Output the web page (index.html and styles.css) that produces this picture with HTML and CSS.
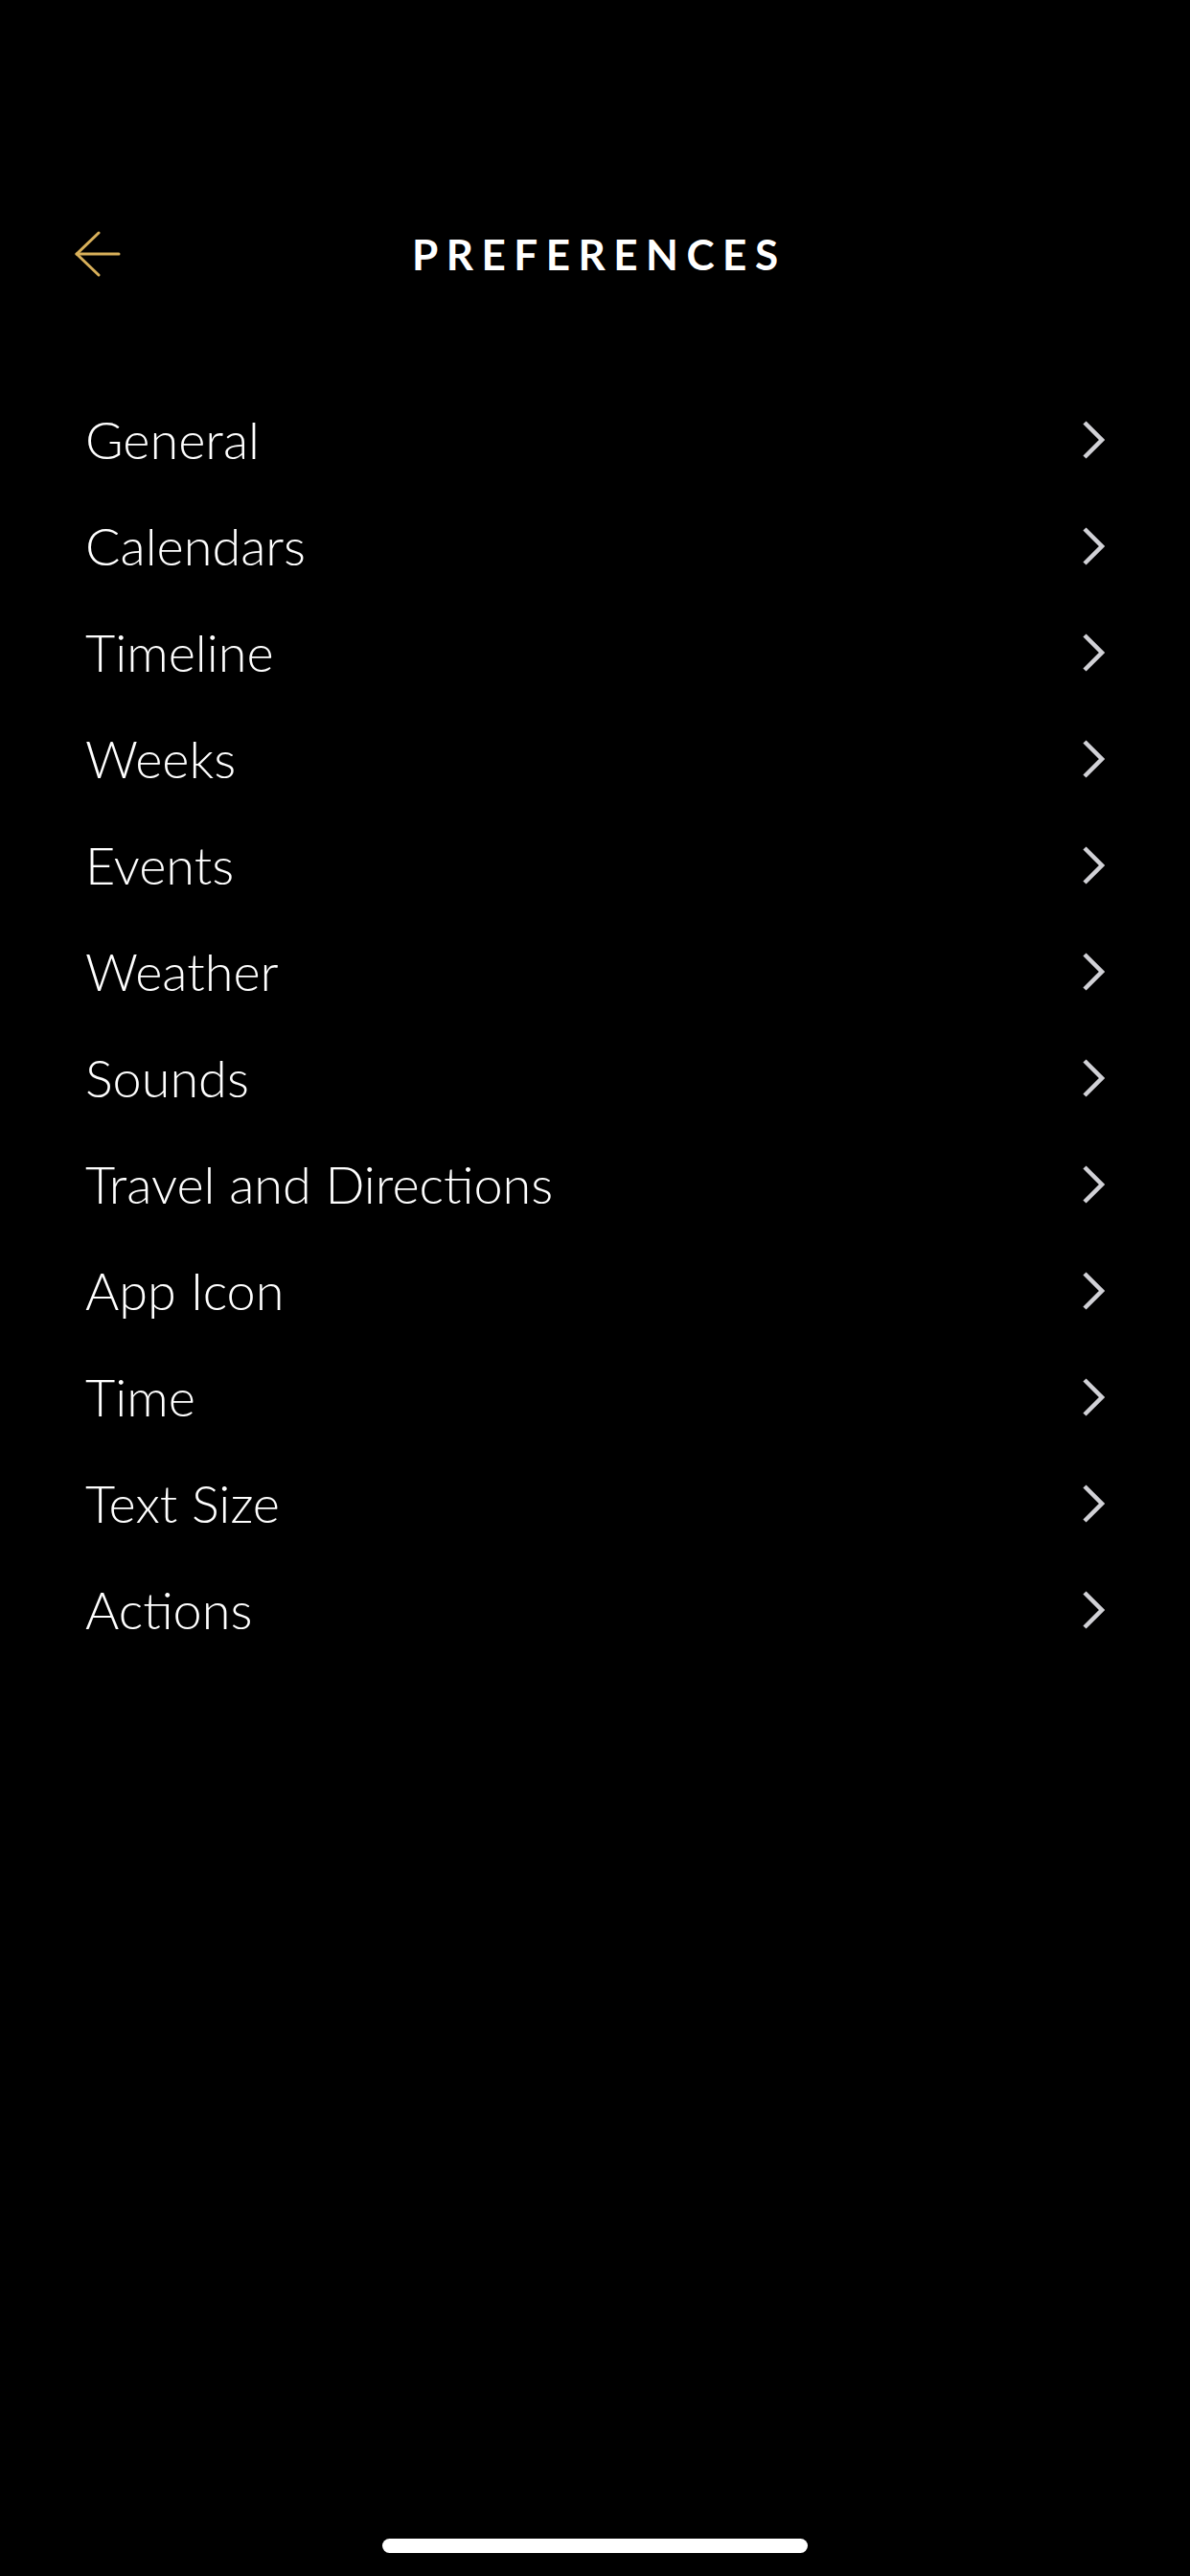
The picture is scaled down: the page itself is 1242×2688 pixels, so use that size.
FILE: index.html
```
<!DOCTYPE html>
<html lang="en">
<head>
    <meta charset="UTF-8">
    <meta name="viewport" content="width=device-width, initial-scale=1.0">
    <title>Preferences</title>
    <link rel="stylesheet" href="styles.css">
</head>
<body>
<div class="screen">

    <div class="topbar">
        <button class="back-button" aria-label="Back">
            <svg width="48" height="48" viewBox="0 0 48 48">
                <polyline points="25,2 2,24 25,46" fill="none" stroke="#d8b05a" stroke-width="3" stroke-linecap="round" stroke-linejoin="round"/>
                <line x1="2" y1="24" x2="46" y2="24" stroke="#d8b05a" stroke-width="3" stroke-linecap="round"/>
            </svg>
        </button>
        <h1 class="title">PREFERENCES</h1>
    </div>

    <ul class="pref-list">
        <li class="pref-row"><span>General</span><svg class="chevron" width="24" height="40" viewBox="0 0 24 40"><polyline points="3,2 21,20 3,38" /></svg></li>
        <li class="pref-row"><span>Calendars</span><svg class="chevron" width="24" height="40" viewBox="0 0 24 40"><polyline points="3,2 21,20 3,38" /></svg></li>
        <li class="pref-row"><span>Timeline</span><svg class="chevron" width="24" height="40" viewBox="0 0 24 40"><polyline points="3,2 21,20 3,38" /></svg></li>
        <li class="pref-row"><span>Weeks</span><svg class="chevron" width="24" height="40" viewBox="0 0 24 40"><polyline points="3,2 21,20 3,38" /></svg></li>
        <li class="pref-row"><span>Events</span><svg class="chevron" width="24" height="40" viewBox="0 0 24 40"><polyline points="3,2 21,20 3,38" /></svg></li>
        <li class="pref-row"><span>Weather</span><svg class="chevron" width="24" height="40" viewBox="0 0 24 40"><polyline points="3,2 21,20 3,38" /></svg></li>
        <li class="pref-row"><span>Sounds</span><svg class="chevron" width="24" height="40" viewBox="0 0 24 40"><polyline points="3,2 21,20 3,38" /></svg></li>
        <li class="pref-row"><span>Travel and Directions</span><svg class="chevron" width="24" height="40" viewBox="0 0 24 40"><polyline points="3,2 21,20 3,38" /></svg></li>
        <li class="pref-row"><span>App Icon</span><svg class="chevron" width="24" height="40" viewBox="0 0 24 40"><polyline points="3,2 21,20 3,38" /></svg></li>
        <li class="pref-row"><span>Time</span><svg class="chevron" width="24" height="40" viewBox="0 0 24 40"><polyline points="3,2 21,20 3,38" /></svg></li>
        <li class="pref-row"><span>Text Size</span><svg class="chevron" width="24" height="40" viewBox="0 0 24 40"><polyline points="3,2 21,20 3,38" /></svg></li>
        <li class="pref-row"><span>Actions</span><svg class="chevron" width="24" height="40" viewBox="0 0 24 40"><polyline points="3,2 21,20 3,38" /></svg></li>
    </ul>

    <div class="home-indicator"></div>
</div>
</body>
</html>
```

FILE: styles.css
```
html, body {
    margin: 0;
    padding: 0;
    background-color: #000;
}

body {
    font-family: Lato, "Open Sans", sans-serif;
    color: #fff;
}

.screen {
    height: 2688px;
    display: flex;
    flex-direction: column;
}

.topbar {
    margin-top: 200px;
    height: 130px;
    display: flex;
    align-items: center;
    justify-content: center;
    position: relative;
}

.back-button {
    position: absolute;
    left: 78px;
    top: 41px;
    padding: 0;
    background: none;
    border: none;
    cursor: pointer;
}

.back-button svg {
    display: block;
}

.title {
    margin: 0;
    font-size: 44px;
    font-weight: 700;
    letter-spacing: 8.5px;
    margin-right: -8.5px;
}

.pref-list {
    list-style-type: none;
    margin: 73px 0 0 0;
    padding: 0;
}

.pref-row {
    height: 111px;
    padding: 0 89px 0 89px;
    display: flex;
    align-items: center;
    justify-content: space-between;
    font-size: 54px;
    font-weight: 300;
}

.chevron {
    display: block;
    fill: none;
    stroke: #d1d1d6;
    stroke-width: 4.5;
}

.home-indicator {
    margin: auto auto 24px auto;
    width: 444px;
    height: 15px;
    border-radius: 8px;
    background-color: #fff;
}
```
